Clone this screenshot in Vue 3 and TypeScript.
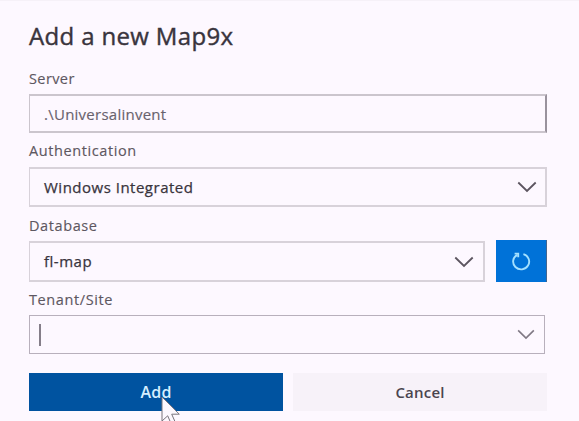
<script setup lang="ts">
import { ref } from 'vue'

const server = ref<string>('.\\Universalinvent')
const authentication = ref<string>('Windows Integrated')
const database = ref<string>('fl-map')
</script>

<template>
  <main class="dialog">
    <h1 class="title">Add a new Map9x</h1>

    <div class="label server-label"><span>Server</span></div>
    <div class="field server"><span class="server-text">{{ server }}</span></div>

    <div class="label auth-label"><span>Authentication</span></div>
    <div class="field auth">
      <span class="auth-text">{{ authentication }}</span>
      <svg class="chevron" width="20" height="12" viewBox="0 0 20 12"><path d="M1.3 1.5 10 10l8.7-8.5" /></svg>
    </div>

    <div class="label database-label"><span>Database</span></div>
    <div class="database-row">
      <div class="field database">
        <span class="database-text">{{ database }}</span>
        <svg class="chevron" width="20" height="12" viewBox="0 0 20 12"><path d="M1.3 1.5 10 10l8.7-8.5" /></svg>
      </div>
      <button class="refresh" aria-label="Refresh">
        <svg width="22" height="22" viewBox="0 0 22 22">
          <path d="M13.4 4.1A8 7.8 0 1 1 7.2 4.8" />
          <path d="M4.6 3.6h3.6v3.6" />
        </svg>
      </button>
    </div>

    <div class="label tenant-label"><span>Tenant/Site</span></div>
    <div class="field tenant">
      <i class="caret"></i>
      <svg class="chevron light" width="18" height="11" viewBox="0 0 20 12"><path d="M1.3 1.5 10 10l8.7-8.5" /></svg>
    </div>

    <div class="actions">
      <button class="add"><span>Add</span></button>
      <button class="cancel"><span>Cancel</span></button>
    </div>
    <svg class="pointer" width="22" height="30" viewBox="0 0 22 30">
      <path d="M2 1v24l5.7-5.2 4 9.2 4-1.8-4-9h7.6z" />
    </svg>
  </main>
</template>

<style>
body {
  background: #fdf8ff;
}
</style>

<style scoped>
.dialog {
  position: relative;
  box-sizing: border-box;
  width: 579px;
  height: 421px;
  padding: 0 32px 0 29px;
  overflow: hidden;
  border-top: 1px solid #f6f1f8;
  background: #fdf8ff;
  color: #39343d;
  font-family: "Open Sans", "Noto Sans", sans-serif;
}
.title {
  height: 67px;
  margin: 0;
  font-size: 24px;
  font-weight: 500;
  line-height: 70px;
  letter-spacing: 0.35px;
  -webkit-text-stroke: 0.4px currentColor;
  white-space: nowrap;
}
.label {
  height: 26px;
  color: #5d5761;
  font-size: 14.5px;
  line-height: 22px;
  letter-spacing: 0.6px;
  -webkit-text-stroke: 0.15px currentColor;
  white-space: nowrap;
}
.server-label { letter-spacing: 0.4px; }
.auth-label { height: 34px; line-height: 35px; }
.database-label { height: 34px; line-height: 37px; }
.tenant-label { height: 33px; line-height: 36px; }
.field {
  display: flex;
  align-items: center;
  justify-content: space-between;
  box-sizing: border-box;
  height: 40px;
  padding: 0 10px 0 14px;
  border: 1px solid #c2bbc5;
  font-size: 15px;
  white-space: nowrap;
}
.server {
  height: 39px;
  border: 2px solid #cbc5cd;
  border-left-width: 1px;
  border-right-color: #99929d;
  color: #69626d;
}
.server-text {
  letter-spacing: 0.25px;
  -webkit-text-stroke: 0.15px currentColor;
}
.auth-text,
.database-text {
  letter-spacing: 0.5px;
  -webkit-text-stroke: 0.25px currentColor;
}
.auth { border: 2px solid #d8d2da; border-left-width: 1px; padding-right: 8px; }
.database-row { display: flex; gap: 11px; }
.database { width: 456px; height: 41px; border: 2px solid #d8d2da; border-left-width: 1px; padding-right: 9px; }
.database-text { margin-top: -2px; }
.refresh {
  display: grid;
  place-items: center;
  box-sizing: border-box;
  width: 51px;
  height: 42px;
  margin: -1px 0 0;
  padding: 0;
  border: 0;
  border-right: 1px solid #43658f;
  background: #0072d8;
}
.refresh path { fill: none; stroke: #a3e0ff; stroke-width: 1.9; }
.tenant { width: 516px; height: 39px; border-color: #b8b0bc; padding: 0 9px; }
.caret { width: 2px; height: 22px; background: #857e89; }
.chevron { flex: none; }
.chevron path { fill: none; stroke: #5c5560; stroke-width: 1.8; }
.light path { stroke: #807985; }
.actions {
  display: grid;
  grid-template-columns: 254px 254px;
  gap: 10px;
  margin-top: 19px;
}
.actions button {
  height: 38px;
  padding: 0;
  border: 0;
  color: #4b454f;
  background: #f7f2f9;
  font-family: inherit;
  font-size: 15px;
  font-weight: 600;
  letter-spacing: 0.2px;
}
.actions .add { background: #0053a0; color: #d5efff; font-size: 16px; }
.pointer {
  position: absolute;
  left: 160px;
  top: 395px;
}
.pointer path { fill: #fcf8ff; stroke: #79747d; stroke-width: 1; }
</style>
